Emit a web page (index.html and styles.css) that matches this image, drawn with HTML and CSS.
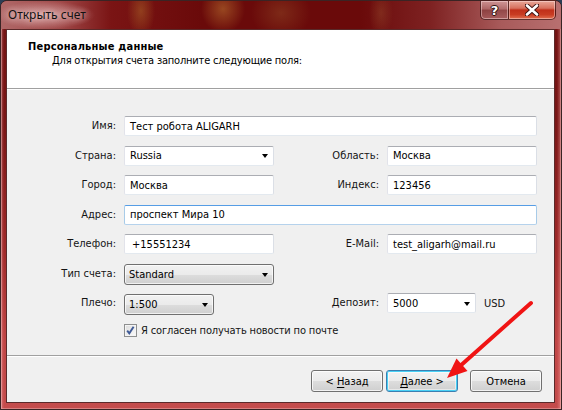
FILE: index.html
```html
<!DOCTYPE html>
<html lang="ru">
<head>
<meta charset="utf-8">
<title>Открыть счет</title>
<link rel="stylesheet" href="styles.css">
</head>
<body>
<div class="window">
  <div class="titlebar">
    <span class="title">Открыть счет</span>
    <div class="caps">
      <div class="cap help"><span>?</span></div>
      <div class="cap close">
        <svg width="14" height="12" viewBox="0 0 14 12"><path d="M2 1.5 L12 10.5 M12 1.5 L2 10.5" stroke="#3a1010" stroke-width="4.4" stroke-linecap="round"/><path d="M2 1.5 L12 10.5 M12 1.5 L2 10.5" stroke="#fff" stroke-width="2.6" stroke-linecap="round"/></svg>
      </div>
    </div>
  </div>
  <div class="client">
    <div class="header">
      <div class="h-title">Персональные данные</div>
      <div class="h-sub">Для открытия счета заполните следующие поля:</div>
    </div>
    <div class="form">
      <div class="lbl">Имя:</div>
      <div class="edit span3">Тест робота ALIGARH</div>

      <div class="lbl">Страна:</div>
      <div class="edit drop">Russia<i class="arrow"></i></div>
      <div class="lbl">Область:</div>
      <div class="edit">Москва</div>

      <div class="lbl">Город:</div>
      <div class="edit">Москва</div>
      <div class="lbl">Индекс:</div>
      <div class="edit">123456</div>

      <div class="lbl">Адрес:</div>
      <div class="edit span3 focus">проспект Мира 10</div>

      <div class="lbl">Телефон:</div>
      <div class="edit phone">+15551234</div>
      <div class="lbl">E-Mail:</div>
      <div class="edit">test_aligarh@mail.ru</div>

      <div class="lbl">Тип счета:</div>
      <div class="combo">Standard<i class="arrow"></i></div>
      <div class="empty span2"></div>

      <div class="lbl">Плечо:</div>
      <div class="combo short">1:500<i class="arrow"></i></div>
      <div class="lbl">Депозит:</div>
      <div class="deposit">
        <div class="edit drop dep">5000<i class="arrow"></i></div>
        <span class="cur">USD</span>
      </div>

      <div class="check span3">
        <span class="box">
          <svg width="11" height="11" viewBox="0 0 11 11"><path d="M2.2 5.6 L4.3 8.3 L8.6 1.8" fill="none" stroke="#3f5a96" stroke-width="1.9"/></svg>
        </span>
        <span class="check-text">Я согласен получать новости по почте</span>
      </div>
    </div>
    <div class="footer">
      <div class="btn"><span>&lt; <u>Н</u>азад</span></div>
      <div class="btn default"><span><u>Д</u>алее &gt;</span></div>
      <div class="btn cancel"><span>Отмена</span></div>
    </div>
  </div>
  <svg class="annot" width="562" height="410" viewBox="0 0 562 410">
    <line x1="531" y1="303" x2="459" y2="367" stroke="#f01414" stroke-width="4" stroke-linecap="round"/>
    <polygon points="447,378 456.5,358.5 467.5,371" fill="#f01414"/>
  </svg>
</div>
</body>
</html>
```

FILE: styles.css
```css
* { box-sizing: border-box; }
html, body { margin: 0; padding: 0; }
body {
  width: 562px;
  height: 410px;
  overflow: hidden;
  background: #2b3d55;
  font-family: "DejaVu Sans Condensed", "DejaVu Sans", sans-serif;
  font-size: 11px;
  color: #000;
}

.window {
  position: relative;
  width: 562px;
  height: 410px;
  display: flex;
  flex-direction: column;
  border: 1px solid #3a2424;
  border-radius: 7px 7px 0 0;
  background:
    linear-gradient(to right, rgba(255,190,190,.35) 0, rgba(255,190,190,0) 3px, rgba(0,0,0,0) 556px, rgba(255,170,170,.45) 100%),
    linear-gradient(to bottom, #8a3030 0, #741414 30px, #7a1616 120px, #a02a2a 250px, #c04545 340px, #c44c4c 100%);
  box-shadow: inset 0 0 0 1px rgba(255,220,220,.35);
}

.titlebar {
  height: 28px;
  flex: none;
  display: flex;
  align-items: flex-start;
  justify-content: space-between;
  border-radius: 6px 6px 0 0;
  background:
    radial-gradient(ellipse 50px 14px at 44px 14px, rgba(255,225,225,.55), rgba(255,225,225,0)),
    radial-gradient(ellipse 14px 26px at 140px 10px, rgba(170,100,40,.55), rgba(170,100,40,0)),
    radial-gradient(ellipse 22px 24px at 222px 8px, rgba(190,120,50,.55), rgba(190,120,50,0)),
    radial-gradient(ellipse 30px 26px at 280px 12px, rgba(150,80,40,.45), rgba(150,80,40,0)),
    radial-gradient(ellipse 12px 24px at 380px 12px, rgba(160,90,50,.35), rgba(160,90,50,0)),
    linear-gradient(to right, #b06868 0, #a04848 60px, #7a1414 110px, #6a0a0a 200px, #6a0a0a 360px, #7e2222 430px, #a85a5a 500px, #b87070 100%);
}

.title {
  padding: 7px 0 0 7px;
  font-family: "Noto Sans", "DejaVu Sans", sans-serif;
  font-size: 12px;
  line-height: 14px;
  color: #111;
  text-shadow: 0 0 6px rgba(255,240,240,.9);
}

.caps {
  display: flex;
  margin: -1px 5px 0 0;
}
.cap {
  height: 20px;
  display: flex;
  align-items: center;
  justify-content: center;
  border: 1px solid rgba(60,20,20,.8);
  box-shadow: inset 0 0 0 1px rgba(255,230,230,.45);
}
.help {
  width: 28px;
  border-right: none;
  border-radius: 0 0 0 5px;
  background: linear-gradient(to bottom, rgba(240,200,200,.55) 0, rgba(190,130,130,.45) 45%, rgba(120,50,50,.45) 50%, rgba(170,100,100,.5) 100%);
}
.help span {
  font-family: "DejaVu Sans", sans-serif;
  font-weight: bold;
  font-size: 13px;
  line-height: 13px;
  color: #fff;
  text-shadow: 0 0 1px #301010, 1px 0 0 #301010, -1px 0 0 #301010, 0 1px 0 #301010, 0 -1px 0 #301010;
}
.close {
  width: 48px;
  border-radius: 0 0 5px 0;
  background: linear-gradient(to bottom, #e9a89a 0, #d7705d 40%, #c0301a 50%, #c83c22 75%, #e07050 100%);
}

.client {
  flex: 1;
  margin: 0 6px 6px 5px;
  border: 1px solid #5a2a2a;
  background: #f0f0f0;
  display: flex;
  flex-direction: column;
}

.header {
  height: 59px;
  flex: none;
  background: #fff;
  border-bottom: 1px solid #a0a0a0;
  padding: 10px 0 0 21px;
  line-height: 14px;
}
.h-title { font-weight: bold; letter-spacing: 0.2px; }
.h-sub { padding-left: 24px; letter-spacing: -0.2px; }

.form {
  flex: 1;
  display: grid;
  grid-template-columns: 97px 150px 99px 150px;
  grid-auto-rows: 20px;
  column-gap: 7px;
  row-gap: 9.5px;
  align-content: start;
  padding: 26px 0 0 13px;
  border-top: 1px solid #fff;
}

.lbl {
  align-self: center;
  text-align: right;
  padding-right: 1px;
  color: #141414;
  line-height: 14px;
}

.span3 { grid-column: span 3; }
.span2 { grid-column: span 2; }

.edit {
  height: 20px;
  display: flex;
  align-items: center;
  justify-content: space-between;
  padding: 0 5px;
  background: #fff;
  border: 1px solid;
  border-color: #abadb3 #dbdfe6 #e3e9ef #e2e3ea;
  border-radius: 2px;
  white-space: nowrap;
}
.edit.focus {
  border-color: #569de5 #a8cbe8 #b5d2ec #a8cbe8;
}
.edit.phone { padding-left: 7px; }
.edit.drop { padding-right: 5px; }

.arrow {
  width: 0;
  height: 0;
  border-left: 3.5px solid transparent;
  border-right: 3.5px solid transparent;
  border-top: 4px solid #000;
  margin-top: 1px;
}

.combo {
  height: 21px;
  display: flex;
  align-items: center;
  justify-content: space-between;
  padding: 0 5px 0 4px;
  border: 1px solid #707070;
  border-radius: 3px;
  background: linear-gradient(to bottom, #f2f2f2 0, #ebebeb 50%, #dddddd 51%, #cfcfcf 100%);
  box-shadow: inset 0 0 0 1px rgba(255,255,255,.7);
}
.combo.short { width: 90px; margin-top: 0.5px; }

.deposit {
  display: flex;
  align-items: center;
  gap: 8px;
}
.edit.dep { width: 89px; }
.cur { color: #141414; }

.check {
  grid-column: 2 / span 3;
  height: 16px;
  display: flex;
  align-items: center;
  gap: 4px;
  color: #141414;
}
.check-text { letter-spacing: -0.15px; }
.box {
  width: 13px;
  height: 13px;
  flex: none;
  border: 1px solid #8e8f8f;
  background: linear-gradient(135deg, #dcdcdc 0, #fbfbfb 100%);
  display: flex;
  align-items: center;
  justify-content: center;
  box-shadow: inset 0 0 0 1px #f4f4f4;
}
.box svg { display: block; }

.footer {
  height: 47px;
  flex: none;
  border-top: 1px solid #a0a0a0;
  box-shadow: inset 0 1px 0 #fff;
  display: flex;
  justify-content: flex-end;
  align-items: flex-start;
  padding: 14px 12px 0 0;
  gap: 3px;
}
.btn {
  width: 72px;
  height: 22px;
  display: flex;
  align-items: center;
  justify-content: center;
  border: 1px solid #707070;
  border-radius: 3px;
  background: linear-gradient(to bottom, #f2f2f2 0, #ebebeb 50%, #dddddd 51%, #cfcfcf 100%);
  box-shadow: inset 0 0 0 1px rgba(255,255,255,.75);
  color: #000;
}
.btn u { text-decoration: underline; text-underline-offset: 2px; }
.btn.default {
  border-color: #3c7fb1;
  box-shadow: inset 0 0 0 1px #48d0f5, inset 0 0 0 2px rgba(255,255,255,.5);
}
.btn.cancel { margin-left: 9px; }

.annot {
  position: absolute;
  left: -1px;
  top: -1px;
  pointer-events: none;
}
```
